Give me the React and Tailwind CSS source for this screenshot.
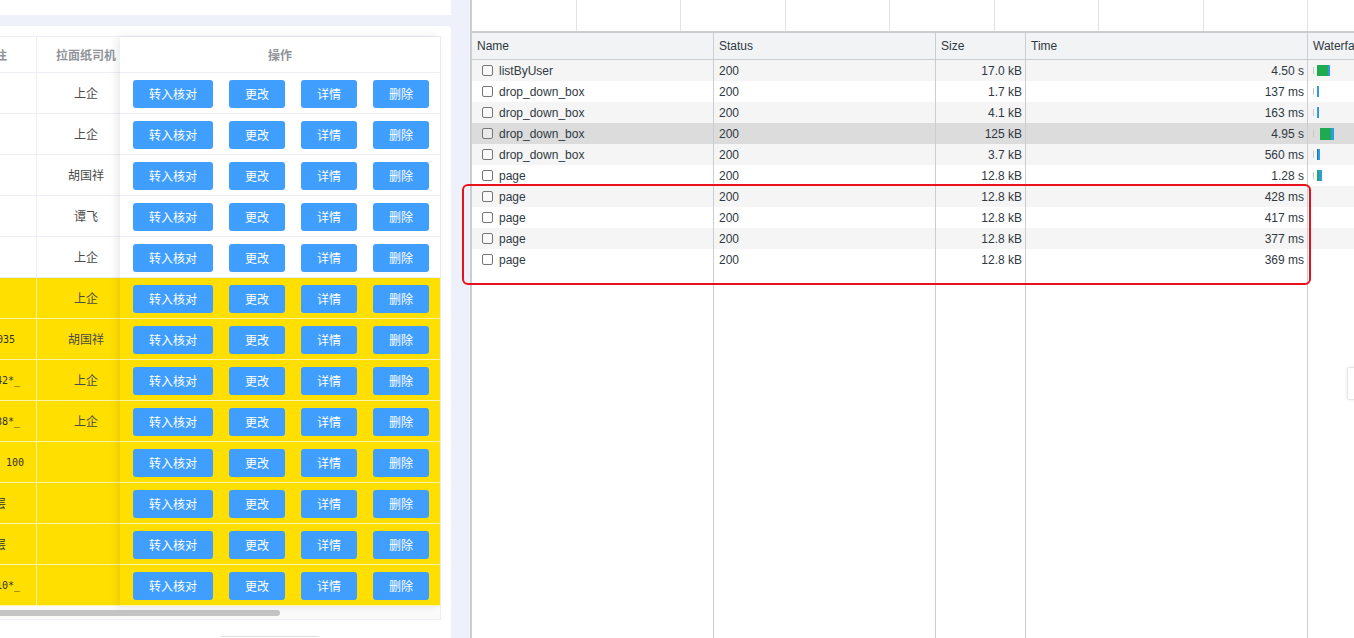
import React from "react";

const leftRows = [
  { c1: "", c2: "上企", y: false },
  { c1: "", c2: "上企", y: false },
  { c1: "", c2: "胡国祥", y: false },
  { c1: "", c2: "谭飞", y: false },
  { c1: "", c2: "上企", y: false },
  { c1: "", c2: "上企", y: true },
  { c1: "035", c2: "胡国祥", y: true, mono: true },
  { c1: "42*_", c2: "上企", y: true, mono: true },
  { c1: "38*_", c2: "上企", y: true, mono: true },
  { c1: " 100", c2: "", y: true, mono: true, pad: true },
  { c1: "层", c2: "", y: true, clip: true },
  { c1: "层", c2: "", y: true, clip: true },
  { c1: "10*_", c2: "", y: true, mono: true },
];

const net = [
  { n: "listByUser", s: "200", z: "17.0 kB", t: "4.50 s", w: "a" },
  { n: "drop_down_box", s: "200", z: "1.7 kB", t: "137 ms", w: "b" },
  { n: "drop_down_box", s: "200", z: "4.1 kB", t: "163 ms", w: "b" },
  { n: "drop_down_box", s: "200", z: "125 kB", t: "4.95 s", w: "c", sel: true },
  { n: "drop_down_box", s: "200", z: "3.7 kB", t: "560 ms", w: "d" },
  { n: "page", s: "200", z: "12.8 kB", t: "1.28 s", w: "e" },
  { n: "page", s: "200", z: "12.8 kB", t: "428 ms" },
  { n: "page", s: "200", z: "12.8 kB", t: "417 ms" },
  { n: "page", s: "200", z: "12.8 kB", t: "377 ms" },
  { n: "page", s: "200", z: "12.8 kB", t: "369 ms" },
];

function Waterfall({ w }) {
  if (!w) return null;
  return (
    <div className="flex items-center h-full pl-[5px]">
      <div className="w-[1px] h-[7px] bg-[#c9c9c9] mr-[3px]" />
      {w === "a" && (
        <div className="flex h-[11px]">
          <div className="w-[11px] bg-[#1eaa4e]" />
          <div className="w-[2px] bg-[#2d9be8]" />
        </div>
      )}
      {w === "b" && <div className="w-[2px] h-[11px] bg-[#2d9be8]" />}
      {w === "c" && (
        <div className="flex h-[12px] ml-[3px]">
          <div className="w-[11px] bg-[#1eaa4e]" />
          <div className="w-[3px] bg-[#2d9be8]" />
        </div>
      )}
      {w === "d" && (
        <div className="flex h-[11px]">
          <div className="w-[1px] bg-[#1f6fa8]" />
          <div className="w-[2px] bg-[#2d9be8]" />
        </div>
      )}
      {w === "e" && (
        <div className="flex h-[11px]">
          <div className="w-[2px] bg-[#1eaa4e]" />
          <div className="w-[3px] bg-[#2d9be8]" />
        </div>
      )}
    </div>
  );
}

function Btn({ w, children }) {
  return (
    <div
      className={`${w} h-[28px] rounded-[3px] bg-[#409eff] text-white text-[12px] flex items-center justify-center`}
    >
      {children}
    </div>
  );
}

export default function App() {
  const cjk = { fontFamily: '"Noto Sans CJK SC", "Noto Sans", sans-serif' };
  return (
    <div className="relative flex w-[1354px] h-[638px] overflow-hidden bg-white">
      {/* Left application page */}
      <div className="w-[470px] h-full bg-[#eef1fa] flex flex-col shrink-0" style={cjk}>
        <div className="w-[451px] h-[15px] bg-white shrink-0" />
        <div className="h-[11px] shrink-0" />
        <div className="w-[451px] flex-1 bg-white rounded-tr-[4px] pt-[10px] flex flex-col">
          <div className="w-[441px] border-t border-r border-b border-[#ebeef5] flex flex-col">
            <div className="flex">
              {/* scrolling part */}
              <div className="w-[120px] flex flex-col overflow-hidden">
                <div className="h-[36px] flex border-b border-[#ebeef5]">
                  <div className="w-[37px] border-r border-[#ebeef5] flex items-center overflow-hidden">
                    <span className="-ml-[5px] text-[12px] font-semibold text-[#909399]">注</span>
                  </div>
                  <div className="w-[83px] pl-[15px] flex items-center justify-center text-[12px] font-semibold text-[#909399]">
                    拉面纸司机
                  </div>
                </div>
                {leftRows.map((r, i) => (
                  <div
                    key={i}
                    className={`h-[41px] flex border-b ${
                      r.y ? "bg-[#ffdf00] border-[#fff3a6]" : "bg-white border-[#ebeef5]"
                    }`}
                  >
                    <div
                      className={`w-[37px] border-r flex items-center overflow-hidden whitespace-pre ${
                        r.y ? "border-[#fff3a6]" : "border-[#ebeef5]"
                      }`}
                    >
                      {r.c1 && (
                        <span
                          className={`text-[#333] ${
                            r.mono ? "text-[10px]" : "text-[12px]"
                          } ${r.clip ? "-ml-[6px]" : ""} ${r.c1 === "035" ? "-ml-[3px]" : ""} ${
                            r.c1.endsWith("*_") ? "-ml-[4px]" : ""
                          }`}
                          style={
                            r.mono
                              ? { fontFamily: '"DejaVu Sans Mono", monospace' }
                              : undefined
                          }
                        >
                          {r.c1}
                        </span>
                      )}
                    </div>
                    <div className="w-[83px] pl-[15px] flex items-center justify-center text-[12px] text-[#4a4a4a]">
                      {r.c2}
                    </div>
                  </div>
                ))}
              </div>
              {/* fixed right column */}
              <div className="w-[320px] flex flex-col relative z-10 shadow-[-3px_0_8px_rgba(0,0,0,0.09)]">
                <div className="h-[36px] flex items-center justify-center bg-white border-b border-[#ebeef5] text-[12px] font-semibold text-[#909399]">
                  操作
                </div>
                {leftRows.map((r, i) => (
                  <div
                    key={i}
                    className={`h-[41px] flex items-start pt-[7px] pl-[13px] gap-[16px] border-b ${
                      r.y ? "bg-[#ffdf00] border-[#fff3a6]" : "bg-white border-[#ebeef5]"
                    }`}
                  >
                    <Btn w="w-[80px]">转入核对</Btn>
                    <Btn w="w-[56px]">更改</Btn>
                    <Btn w="w-[56px]">详情</Btn>
                    <Btn w="w-[56px]">删除</Btn>
                  </div>
                ))}
              </div>
            </div>
            {/* scrollbar */}
            <div className="h-[13px] bg-[#fafafa] flex items-center">
              <div className="w-[280px] h-[6px] rounded-r-full bg-[#c4c4c4]" />
            </div>
          </div>
          <div className="mt-[16px] ml-[221px] w-[98px] h-[4px] border-t border-[#dcdfe6]" />
        </div>
      </div>

      {/* DevTools network panel */}
      <div
        className="flex-1 h-full flex flex-col border-l-2 border-[#cbcdd1] text-[12px] text-[#303942]"
        style={{ fontFamily: '"Liberation Sans", Arial, sans-serif' }}
      >
        <div className="h-[33px] flex border-b-2 border-[#cbcdd1] shrink-0">
          {Array.from({ length: 8 }).map((_, i) => (
            <div key={i} className="w-[104.5px] h-full border-r border-[#e3e3e3] shrink-0" />
          ))}
          <div className="flex-1" />
        </div>
        <div className="flex-1 flex relative">
          {/* column lines */}
          <div className="absolute inset-0 flex pointer-events-none">
            <div className="w-[242px] border-r border-[#cbcdd1]" />
            <div className="w-[222px] border-r border-[#cbcdd1]" />
            <div className="w-[90px] border-r border-[#cbcdd1]" />
            <div className="w-[282px] border-r border-[#cbcdd1]" />
          </div>
          <div className="flex-1 flex flex-col">
            <div className="h-[27px] flex bg-[#f1f3f4] border-b border-[#cbcdd1]">
              <div className="w-[242px] pl-[5px] flex items-center">Name</div>
              <div className="w-[222px] pl-[5px] flex items-center">Status</div>
              <div className="w-[90px] pl-[5px] flex items-center">Size</div>
              <div className="w-[282px] pl-[5px] flex items-center">Time</div>
              <div className="flex-1 pl-[5px] flex items-center whitespace-nowrap overflow-hidden">
                Waterfall
              </div>
            </div>
            {net.map((r, i) => (
              <div
                key={i}
                className={`h-[21px] flex ${
                  r.sel ? "bg-[#dcdcdc]" : i % 2 === 0 ? "bg-[#f5f5f5]" : "bg-white"
                }`}
              >
                <div className="w-[242px] pl-[10px] flex items-center gap-[6px]">
                  <div className="w-[11px] h-[11px] border border-[#767676] rounded-[2px] bg-white/40" />
                  <span>{r.n}</span>
                </div>
                <div className="w-[222px] pl-[5px] flex items-center">{r.s}</div>
                <div className="w-[90px] pr-[4px] flex items-center justify-end">{r.z}</div>
                <div className="w-[282px] pr-[4px] flex items-center justify-end">{r.t}</div>
                <div className="flex-1">
                  <Waterfall w={r.w} />
                </div>
              </div>
            ))}
          </div>
          {/* small floating element at right edge */}
          <div className="absolute left-[875px] top-[334px] w-[20px] h-[33px] bg-white border border-[#e6e6e6] rounded-[2px] shadow-[0_0_4px_rgba(0,0,0,0.08)]" />
        </div>
      </div>

      {/* red highlight box */}
      <div className="absolute left-[462px] top-[184px] w-[849px] h-[101px] border-2 border-[#e8111b] rounded-[6px] pointer-events-none" />
    </div>
  );
}
